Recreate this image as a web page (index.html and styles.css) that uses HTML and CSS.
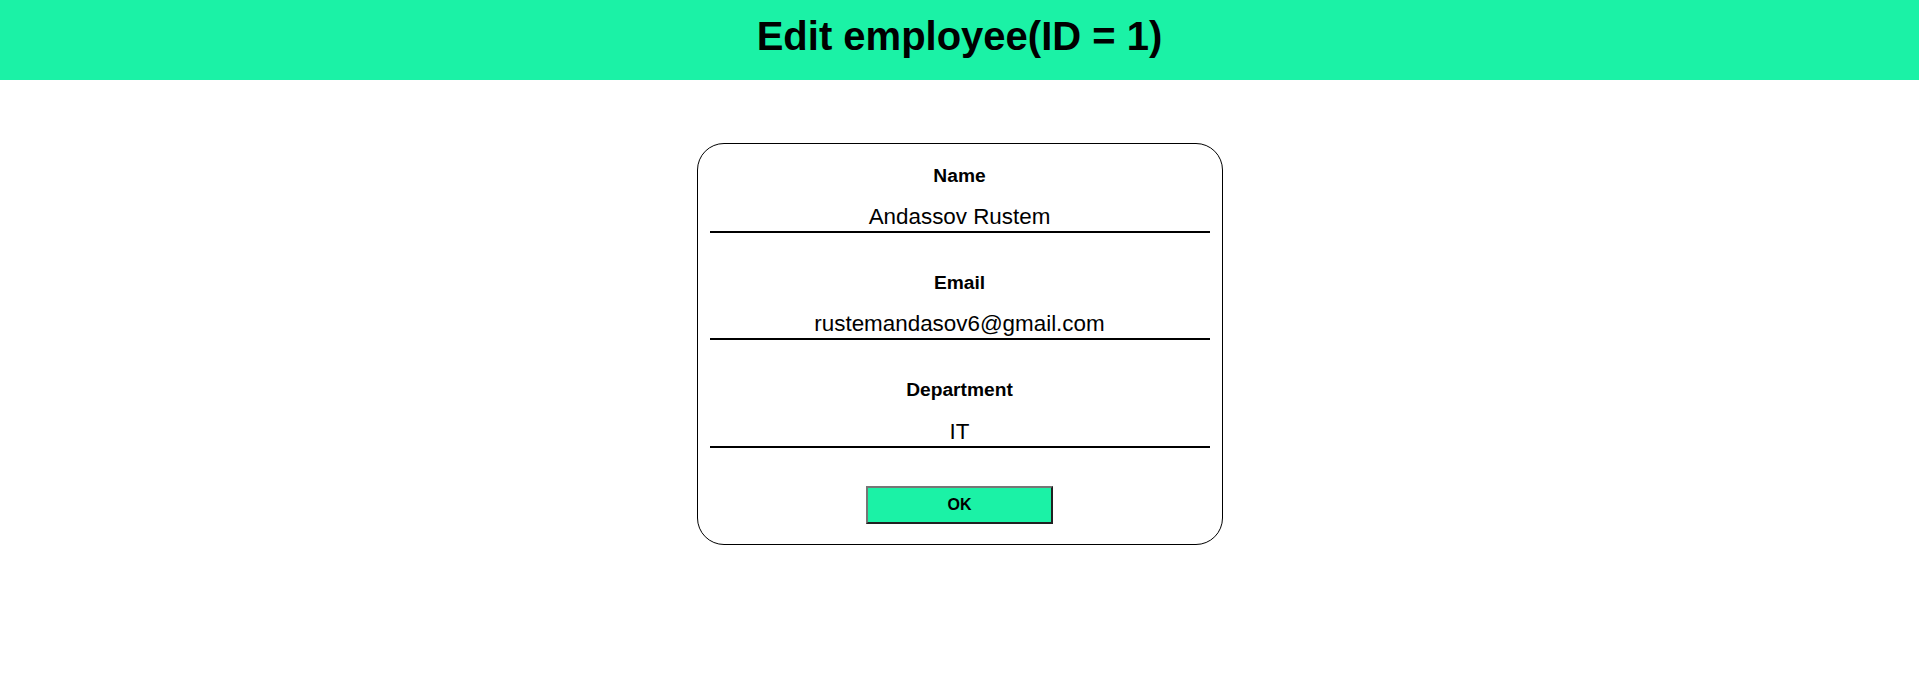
FILE: index.html
```html
<!DOCTYPE html>
<html lang="en">
<head>
<meta charset="utf-8">
<title>Edit employee</title>
<link rel="stylesheet" href="styles.css">
</head>
<body>
<header class="topbar">
  <h1 class="topbar-title">Edit employee(ID = 1)</h1>
</header>
<main class="page">
  <form class="card">
    <div class="fields">
      <div class="field">
        <label class="field-label" for="name">Name</label>
        <input class="field-input" id="name" type="text" value="Andassov Rustem">
      </div>
      <div class="field">
        <label class="field-label" for="email">Email</label>
        <input class="field-input" id="email" type="text" value="rustemandasov6@gmail.com">
      </div>
      <div class="field">
        <label class="field-label" for="dept">Department</label>
        <input class="field-input" id="dept" type="text" value="IT">
      </div>
    </div>
    <button class="ok-button" type="button">OK</button>
  </form>
</main>
</body>
</html>
```

FILE: styles.css
```css
* {
  box-sizing: border-box;
}

html, body {
  margin: 0;
  padding: 0;
  background: #ffffff;
  font-family: "Liberation Sans", Arial, sans-serif;
  color: #000;
}

.topbar {
  height: 80px;
  background: #1bf2a6;
  padding-top: 13.7px;
  text-align: center;
}

.topbar-title {
  margin: 0;
  font-size: 40px;
  font-weight: bold;
  line-height: normal;
}

.page {
  display: flex;
  justify-content: center;
  padding-top: 63px;
}

.card {
  width: 526px;
  border: 1px solid #000;
  border-radius: 27px;
  padding: 20.5px 12px 20px;
  display: flex;
  flex-direction: column;
  align-items: center;
}

.fields {
  width: 100%;
  display: flex;
  flex-direction: column;
  gap: 39.3px;
}

.field {
  width: 100%;
  display: flex;
  flex-direction: column;
  align-items: center;
}

.field-label {
  font-size: 19.2px;
  font-weight: bold;
  line-height: normal;
  margin-bottom: 18.2px;
}

.field-input {
  display: block;
  width: 100%;
  height: 28px;
  padding: 0 0 2px;
  border: 0;
  border-bottom: 2px solid #000;
  background: transparent;
  font-family: "Liberation Sans", Arial, sans-serif;
  font-size: 22.4px;
  color: #000;
  text-align: center;
  outline: none;
}

.ok-button {
  margin-top: 38.1px;
  width: 187px;
  height: 38px;
  background: #1bf2a6;
  border: 2px outset #767676;
  font-family: "Liberation Sans", Arial, sans-serif;
  font-size: 16px;
  font-weight: bold;
  color: #000;
  padding: 0;
}
```
